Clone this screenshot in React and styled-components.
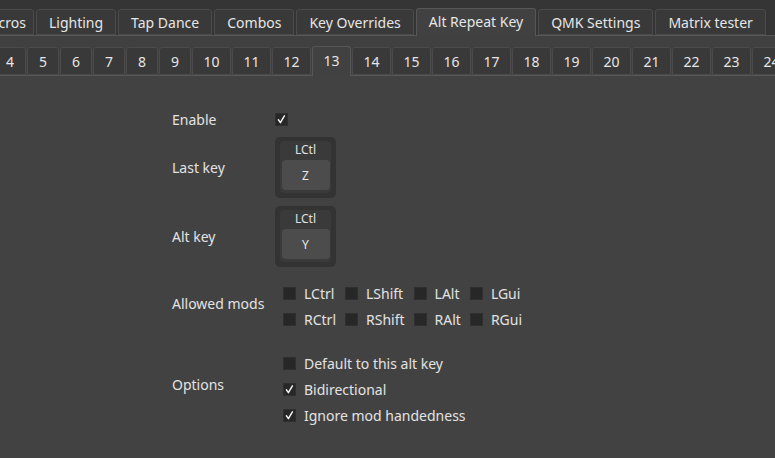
import styled, { createGlobalStyle } from "styled-components";

const GlobalStyle = createGlobalStyle`
  html, body {
    margin: 0;
    padding: 0;
    background: #353535;
  }
  body {
    font-family: "Noto Sans", "Open Sans", sans-serif;
    font-size: 14px;
    color: #e4e4e4;
  }
`;

const mainTabs = [
  "Macros",
  "Lighting",
  "Tap Dance",
  "Combos",
  "Key Overrides",
  "Alt Repeat Key",
  "QMK Settings",
  "Matrix tester",
];

const indexTabs = Array.from({ length: 21 }, (_, i) => String(i + 4));

const mods = [
  ["LCtrl", "LShift", "LAlt", "LGui"],
  ["RCtrl", "RShift", "RAlt", "RGui"],
];

const Window = styled.div`
  width: 775px;
  height: 458px;
  overflow: hidden;
  display: flex;
  flex-direction: column;
  background: #353535;
`;

const TabBar = styled.div`
  display: flex;
  align-items: flex-end;
  gap: ${(p) => p.$gap}px;
  height: ${(p) => p.$height}px;
  margin-left: ${(p) => p.$offset}px;
  flex-shrink: 0;
  position: relative;
  z-index: 1;
`;

const Tab = styled.div`
  flex-shrink: 0;
  box-sizing: border-box;
  height: ${(p) => (p.$active ? p.$h + 2 : p.$h)}px;
  padding: 0 ${(p) => p.$padR ?? p.$pad}px 0 ${(p) => p.$pad}px;
  display: flex;
  align-items: center;
  justify-content: center;
  padding-bottom: ${(p) => (p.$active ? 2 : 0)}px;
  min-width: ${(p) => p.$min || 0}px;
  background: ${(p) => (p.$active ? "#414141" : "#393939")};
  border: 1px solid ${(p) => (p.$active ? "#575757" : "#4b4b4b")};
  border-bottom: ${(p) => (p.$active ? "none" : "1px solid #4b4b4b")};
  border-radius: 3px 3px 0 0;
  margin-bottom: ${(p) => (p.$active ? -1 : 0)}px;
  color: #e6e6e6;
  white-space: nowrap;
  font-size: 14px;
`;

const Pane = styled.div`
  flex: 1;
  display: flex;
  flex-direction: column;
  background: #404040;
  border-top: 1px solid #575757;
`;

const SubPane = styled.div`
  flex: 1;
  background: #424242;
  border-top: 1px solid #575757;
  padding: 34px 0 0 172px;
`;

const Form = styled.div`
  display: grid;
  grid-template-columns: 103px auto;
  align-items: center;
  row-gap: 8px;
`;

const Label = styled.div`
  color: #e2e2e2;
  font-size: 14px;
  grid-row: ${(p) => p.$row};
`;

const Field = styled.div`
  grid-row: ${(p) => p.$row};
  margin-top: ${(p) => p.$mt || 0}px;
  padding-left: ${(p) => p.$indent || 0}px;
  display: flex;
  flex-direction: column;
`;

const Box = styled.span`
  width: 13px;
  height: 13px;
  box-sizing: border-box;
  background: #272727;
  border: 1px solid #2f2f2f;
  display: inline-flex;
  align-items: center;
  justify-content: center;
  flex-shrink: 0;
`;

const Check = ({ on }) => (
  <Box>
    {on && (
      <svg width="11" height="11" viewBox="0 0 11 11">
        <path
          d="M2.4 5.8 L4.4 8.6 L8.4 1.8"
          fill="none"
          stroke="#f0f0f0"
          strokeWidth="1.5"
          strokeLinecap="round"
          strokeLinejoin="round"
        />
      </svg>
    )}
  </Box>
);

const CheckRow = styled.div`
  display: flex;
  align-items: center;
  gap: 8px;
  height: 26px;
  color: #e2e2e2;
  white-space: nowrap;
`;

const ModsGrid = styled.div`
  display: grid;
  grid-template-columns: repeat(4, auto);
  justify-content: start;
  column-gap: 9px;
`;

const KeyOuter = styled.div`
  width: 61px;
  height: 61px;
  box-sizing: border-box;
  background: #333333;
  border-radius: 5px;
  padding: 4px 5px 5px 5px;
`;

const KeyInner = styled.div`
  height: 100%;
  box-sizing: border-box;
  background: #3a3a3a;
  border-radius: 4px;
  display: flex;
  flex-direction: column;
  align-items: center;
  padding: 0 1px 1px;
`;

const KeyMod = styled.div`
  font-size: 12px;
  color: #e0e0e0;
  height: 19px;
  line-height: 18px;
`;

const KeyCap = styled.div`
  width: 48px;
  height: 30px;
  background: #4c4c4c;
  border-radius: 4px;
  display: flex;
  align-items: center;
  justify-content: center;
  font-size: 12px;
  color: #e8e8e8;
`;

const KeyWidget = ({ mod, code }) => (
  <KeyOuter>
    <KeyInner>
      <KeyMod>{mod}</KeyMod>
      <KeyCap>{code}</KeyCap>
    </KeyInner>
  </KeyOuter>
);

export default function App() {
  return (
    <Window>
      <GlobalStyle />
      <TabBar $height={35} $offset={-35} $gap={2}>
        {mainTabs.map((t, i) => (
          <Tab
            key={t}
            $h={26}
            $pad={12}
            $padR={i === 0 ? 7 : undefined}
            $active={t === "Alt Repeat Key"}
          >
            {t}
          </Tab>
        ))}
      </TabBar>
      <Pane>
        <TabBar $height={39} $offset={-6} $gap={1}>
          {indexTabs.map((t) => (
            <Tab
              key={t}
              $h={28}
              $pad={6}
              $min={t.length > 1 ? 39 : 32}
              $active={t === "13"}
            >
              {t}
            </Tab>
          ))}
        </TabBar>
        <SubPane>
          <Form>
            <Label $row={1}>Enable</Label>
            <Field $row={1}>
              <Check on />
            </Field>
            <Label $row={2}>Last key</Label>
            <Field $row={2}>
              <KeyWidget mod="LCtl" code="Z" />
            </Field>
            <Label $row={3}>Alt key</Label>
            <Field $row={3}>
              <KeyWidget mod="LCtl" code="Y" />
            </Field>
            <Label $row={4}>Allowed mods</Label>
            <Field $row={4} $indent={8} $mt={5}>
              <ModsGrid>
                {mods.flat().map((m) => (
                  <CheckRow key={m}>
                    <Check />
                    {m}
                  </CheckRow>
                ))}
              </ModsGrid>
            </Field>
            <Label $row={5}>Options</Label>
            <Field $row={5} $indent={8} $mt={10}>
              <CheckRow>
                <Check />
                Default to this alt key
              </CheckRow>
              <CheckRow>
                <Check on />
                Bidirectional
              </CheckRow>
              <CheckRow>
                <Check on />
                Ignore mod handedness
              </CheckRow>
            </Field>
          </Form>
        </SubPane>
      </Pane>
    </Window>
  );
}
